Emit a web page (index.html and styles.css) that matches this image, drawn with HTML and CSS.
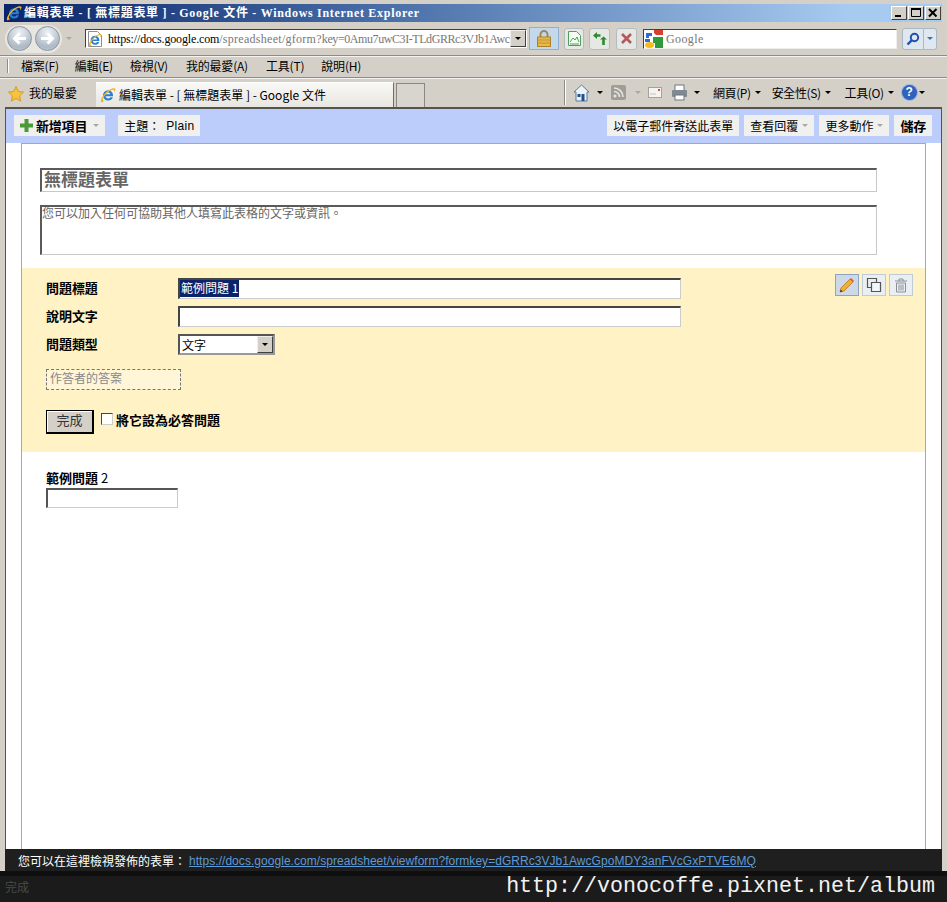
FILE: index.html
```html
<!DOCTYPE html>
<html lang="zh-Hant">
<head>
<meta charset="utf-8">
<title>編輯表單 - [ 無標題表單 ] - Google 文件</title>
<link rel="stylesheet" href="styles.css">
</head>
<body>
<svg class="defs" width="0" height="0">
  <defs>
    <symbol id="ie" viewBox="0 0 16 16">
      <path d="M8 3.200a5 5 0 0 1 5 5v1H5.600c.2 1.400 1.200 2.200 2.500 2.200 1 0 1.800-.4 2.200-1.200h2.600c-.6 2-2.500 3.300-4.800 3.300A5.100 5.100 0 0 1 3 8.300 5 5 0 0 1 8 3.200zM5.700 7.300h4.600C10.100 6.100 9.200 5.400 8 5.400s-2.100.7-2.300 1.900z" fill="#2a7fd4"/>
      <path d="M1 15C0 12.500 4 6 9 3c3-1.800 5.800-2.300 6.400-1.200.5.800-.3 2.200-1.500 3.400.3-1.100.4-1.900 0-2.300-.8-.8-3.700.3-6.200 2.600C4.500 8.300 2.500 11.500 3 13.200c.2.500.9.700 1.700.4C3.300 15 1.500 15.700 1 15z" fill="#f0b429"/>
    </symbol>
  </defs>
</svg>
<div class="window">
  <header class="titlebar">
    <svg class="ico16 title-ie"><use href="#ie"/></svg>
    <span class="title-text">編輯表單 - [ 無標題表單 ] - Google 文件 - Windows Internet Explorer</span>
    <div class="winbtns">
      <span class="winbtn"><svg width="12" height="12"><rect x="2" y="8" width="6" height="2" fill="#000"/></svg></span>
      <span class="winbtn"><svg width="12" height="12"><path d="M1.500 1.500h9v8h-9z" fill="none" stroke="#000"/><rect x="1" y="1" width="10" height="2" fill="#000"/></svg></span>
      <span class="winbtn"><svg width="12" height="12"><path d="M2 2l7.500 7.500M9.500 2L2 9.500" stroke="#000" stroke-width="2" fill="none"/></svg></span>
    </div>
  </header>

  <nav class="navbar">
    <div class="travel">
      <span class="round"><svg width="25" height="25" viewBox="0 0 25 25"><path d="M19 12.500H8M12.500 7.500l-5 5 5 5" fill="none" stroke="#fff" stroke-width="3"/></svg></span>
      <span class="round round-next"><svg width="25" height="25" viewBox="0 0 25 25"><path d="M6 12.500h11M12.500 7.500l5 5-5 5" fill="none" stroke="#fff" stroke-width="3"/></svg></span>
    </div>
    <span class="caret caret-light nav-caret"></span>
    <div class="address">
      <span class="page-ico"><svg width="14" height="16" viewBox="0 0 14 16"><path d="M.5.500h9l4 4v11H.5z" fill="#fff" stroke="#8e8e8e"/><use href="#ie" x="0" y="2" width="14" height="14"/></svg></span>
      <span class="url"><b>https://docs.google.com</b>/spreadsheet/gform?<span class="url-key">key=0Amu7uwC3I-TLdGRRc3VJb1AwcG</span></span>
      <span class="combo-btn"><span class="caret"></span></span>
    </div>
    <span class="lock"><svg width="14" height="17" viewBox="0 0 14 17"><path d="M3.500 7V4.500a3.500 3.500 0 0 1 7 0V7" fill="none" stroke="#9a8a5a" stroke-width="2"/><rect x=".5" y="7" width="13" height="9.500" fill="#e9b84a" stroke="#a8852a"/><path d="M1 10h12M1 13h12" stroke="#c0902c"/></svg></span>
    <span class="tool t-compat"><svg width="13" height="15" viewBox="0 0 13 15"><path d="M.5.500h8l4 4v10H.5z" fill="#f4fbf0" stroke="#4f9f5a"/><path d="M2 11l3-4 2 2 2-3 2 5M2 13h9" fill="none" stroke="#4f9f5a"/></svg></span>
    <span class="tool t-refresh"><svg width="16" height="15" viewBox="0 0 16 15"><path d="M1 4.500L5 1v2.200h3.500v2.600H5V8zM15 8.500l-3.500-3-3.500 3h2.200V14h2.600V8.500z" fill="#2f8a2f"/></svg></span>
    <span class="tool t-stop"><svg width="13" height="13" viewBox="0 0 13 13"><path d="M2 2l9 9M11 2l-9 9" stroke="#b8565c" stroke-width="2.600"/></svg></span>
    <div class="search">
      <svg class="glogo" width="18" height="18" viewBox="0 0 18 18"><rect width="18" height="18" fill="#fff"/><path d="M9 0h9v5H11L9 3z" fill="#d8402c"/><path d="M1 3h6v3H4v2H1zM0 9h5v3H0z" fill="#2b6fd6"/><path d="M8 7h10v11H10V13H8z" fill="#2f9a3a"/><ellipse cx="4.500" cy="15" rx="4.500" ry="3" fill="#f2bb1e"/></svg>
      <span class="search-text">Google</span>
    </div>
    <span class="go"><svg width="14" height="14" viewBox="0 0 14 14"><circle cx="8.500" cy="5.500" r="3.700" fill="none" stroke="#1f50b0" stroke-width="2"/><path d="M6 8l-4.500 4.500" stroke="#1f50b0" stroke-width="2.400"/></svg></span>
    <span class="go-more"><span class="caret caret-blue"></span></span>
  </nav>

  <div class="menubar">
    <span class="grip"></span>
    <span class="menu m1">檔案(F)</span>
    <span class="menu m2">編輯(E)</span>
    <span class="menu m3">檢視(V)</span>
    <span class="menu m4">我的最愛(A)</span>
    <span class="menu m5">工具(T)</span>
    <span class="menu m6">說明(H)</span>
  </div>

  <div class="favbar">
    <svg class="star" width="16" height="16" viewBox="0 0 16 16"><path d="M8 .5l2.300 5 5.200.6-3.900 3.600 1.100 5.400L8 12.400l-4.700 2.700 1.100-5.400L.5 6.100l5.200-.6z" fill="#f6c33b" stroke="#d99a1e"/></svg>
    <span class="fav-label">我的最愛</span>
    <div class="tab">
      <svg class="ico16"><use href="#ie"/></svg>
      <span>編輯表單 - [ 無標題表單 ] - Google 文件</span>
    </div>
    <div class="newtab"></div>
    <div class="cmdbar">
      <svg class="c-home" width="17" height="18" viewBox="0 0 17 18"><path d="M8.500 1L1 8h2v9h11V8h2z" fill="#eef2f5" stroke="#4f7fa8"/><rect x="8.500" y="10" width="3" height="7" fill="#234f8a"/><rect x="4.500" y="10" width="3" height="3" fill="#234f8a"/></svg>
      <span class="caret c-a1"></span>
      <svg class="c-rss" width="15" height="15" viewBox="0 0 15 15"><rect width="15" height="15" rx="2" fill="#9f9d96"/><circle cx="4" cy="11" r="1.600" fill="#e6e4df"/><path d="M3 6.500a5.500 5.500 0 0 1 5.500 5.500M3 3a9 9 0 0 1 9 9" fill="none" stroke="#e6e4df" stroke-width="1.600"/></svg>
      <span class="caret caret-light c-a2"></span>
      <svg class="c-mail" width="14" height="11" viewBox="0 0 14 11"><rect x=".5" y=".5" width="13" height="10" fill="#f4f3f0" stroke="#a5a29b"/><rect x="10" y="2" width="2" height="2" fill="#c8504c"/><path d="M2 7h6" stroke="#c4c1ba"/></svg>
      <svg class="c-print" width="17" height="17" viewBox="0 0 17 17"><rect x="4" y="1" width="9" height="6" fill="#fff" stroke="#6f7780"/><rect x="1" y="6" width="15" height="7" rx="1" fill="#7f8a95"/><rect x="4" y="11" width="9" height="5" fill="#fff" stroke="#6f7780"/></svg>
      <span class="caret c-a3"></span>
      <span class="cmd c-page">網頁(P)</span><span class="caret c-a4"></span>
      <span class="cmd c-safe">安全性(S)</span><span class="caret c-a4"></span>
      <span class="cmd c-tools">工具(O)</span><span class="caret c-a4"></span>
      <span class="help">?</span><span class="caret c-a5"></span>
    </div>
  </div>

  <main class="viewport">
    <div class="appbar">
      <div class="appbar-left">
        <button class="tbtn tbtn-new"><svg width="13" height="13" viewBox="0 0 13 13"><path d="M4.500 0h4v4.500H13v4H8.500V13h-4V8.500H0v-4h4.500z" fill="#4c9a3a"/></svg><b>新增項目</b><span class="caret caret-light"></span></button>
        <button class="tbtn tbtn-theme"><span>主題：</span><span class="plain">Plain</span></button>
      </div>
      <div class="appbar-right">
        <button class="tbtn">以電子郵件寄送此表單</button>
        <button class="tbtn">查看回覆<span class="caret caret-light"></span></button>
        <button class="tbtn">更多動作<span class="caret caret-light"></span></button>
        <button class="tbtn"><b>儲存</b></button>
      </div>
    </div>

    <section class="card">
      <div class="field form-title">無標題表單</div>
      <div class="field form-desc">您可以加入任何可協助其他人填寫此表格的文字或資訊。</div>

      <div class="editor">
        <div class="editor-form">
          <div class="row">
            <label class="row-label">問題標題</label>
            <div class="field text-input"><span class="selected">範例問題 1</span></div>
          </div>
          <div class="row">
            <label class="row-label">說明文字</label>
            <div class="field text-input"></div>
          </div>
          <div class="row">
            <label class="row-label">問題類型</label>
            <div class="field select-input"><span>文字</span><span class="combo-btn"><span class="caret"></span></span></div>
          </div>
          <div class="answer">作答者的答案</div>
          <div class="done-row">
            <button class="done">完成</button>
            <span class="check"></span>
            <b class="check-label">將它設為必答問題</b>
          </div>
        </div>
        <div class="editor-icons">
          <span class="ibtn ibtn-on"><svg width="16" height="16" viewBox="0 0 16 16"><path d="M1 15l1-4L11 2l3 3-9 9z" fill="#f2b02e" stroke="#a8701a" stroke-width=".7"/><path d="M11 2l1-1 3 3-1 1z" fill="#d9534f"/><path d="M1 15l.6-2.600 2 2z" fill="#333"/></svg></span>
          <span class="ibtn"><svg width="16" height="16" viewBox="0 0 16 16"><path d="M1.500 1.500h9v9h-9z" fill="none" stroke="#555" stroke-width="1.200"/><path d="M5.500 5.500h9v9h-9z" fill="#f2f7fb" stroke="#555" stroke-width="1.200"/></svg></span>
          <span class="ibtn"><svg width="14" height="15" viewBox="0 0 14 15"><path d="M1 3h12M5 3V1h4v2M2.500 5h9v9h-9zM5 6.500v6M7 6.500v6M9 6.500v6" fill="none" stroke="#8a8f94"/></svg></span>
        </div>
      </div>

      <div class="sample">
        <div class="sample-label"><b>範例問題</b> 2</div>
        <div class="field sample-input"></div>
      </div>
    </section>
  </main>

  <div class="overlay">
    <div class="notice">
      <span>您可以在這裡檢視發佈的表單：</span>
      <a class="notice-link" href="#">https://docs.google.com/spreadsheet/viewform?formkey=dGRRc3VJb1AwcGpoMDY3anFVcGxPTVE6MQ</a>
    </div>
    <div class="status">
      <span class="status-done">完成</span>
      <span class="mark">http://vonocoffe.pixnet.net/album</span>
    </div>
  </div>
</div>
</body>
</html>
```

FILE: styles.css
```css
* { box-sizing: border-box; }
html, body { margin: 0; padding: 0; }
body { font: 12px/14px "Noto Sans CJK TC", "Liberation Sans", sans-serif; color: #000; overflow: hidden; }
.defs { position: absolute; }
.ico16 { width: 16px; height: 16px; flex: none; }
.caret { display: inline-block; width: 0; height: 0; flex: none; border-left: 3px solid transparent; border-right: 3px solid transparent; border-top: 3px solid #000; }
.caret-light { border-top-color: #a8a8a8; }
.caret-blue { border-top-color: #3a6fc0; }

.window { position: relative; width: 947px; height: 902px; overflow: hidden; display: flex; flex-direction: column; background: #d4d0c8; }

.titlebar { flex: none; height: 18px; margin: 4px 5px 0 4px; display: flex; align-items: center; background: linear-gradient(90deg, #0a246a 0%, #3f649f 35%, #a6caf0 90%); color: #fff; }
.title-ie { margin-left: 2px; }
.title-text { margin-left: 2px; font: bold 12px/14px "Liberation Serif", "Noto Sans CJK TC", serif; letter-spacing: .7px; white-space: nowrap; }
.winbtns { margin-left: auto; display: flex; gap: 1px; padding-right: 1px; }
.winbtn { width: 16px; height: 14px; display: flex; align-items: center; justify-content: center; background: #d4d0c8; border: 1px solid; border-color: #fff #404040 #404040 #fff; }

.navbar { flex: none; height: 34px; display: flex; align-items: center; border-bottom: 1px solid #8e8c86; }
.travel { width: 57px; height: 28px; margin-left: 5px; padding: 0 2px; display: flex; align-items: center; gap: 3px; background: #e8e6e0; border-radius: 14px; flex: none; }
.round { width: 25px; height: 25px; border-radius: 50%; background: radial-gradient(circle at 50% 25%, #eef2f6, #aeb9c5 70%, #c8d2dc); border: 1px solid #8b96a2; display: flex; align-items: center; justify-content: center; flex: none; }
.round svg { margin: -1px; }
.nav-caret { margin-left: 4px; }
.address { width: 442px; height: 19px; margin-left: 13px; display: flex; align-items: center; background: #fff; border: 1px solid; border-color: #404040 #fff #fff #404040; overflow: hidden; flex: none; }
.page-ico { margin-left: 2px; display: flex; flex: none; }
.url { margin-left: 6px; width: 403px; overflow: hidden; white-space: nowrap; font: 12px/14px "Liberation Serif", serif; color: #777; letter-spacing: .28px; }
.url b { font-weight: normal; color: #000; letter-spacing: -.15px; }
.url-key { letter-spacing: -.42px; }
.combo-btn { width: 16px; align-self: stretch; flex: none; margin-left: auto; background: #d4d0c8; border: 1px solid; border-color: #eee #404040 #404040 #eee; display: flex; align-items: center; justify-content: center; }
.lock { width: 30px; height: 23px; margin-left: 2px; background: #c4d8ec; border: 1px solid #8fb0cf; display: flex; align-items: center; justify-content: center; flex: none; }
.tool { height: 22px; background: #e6e8e6; border: 1px solid #b5bcc0; border-radius: 3px; display: flex; align-items: center; justify-content: center; flex: none; }
.t-compat { width: 20px; margin-left: 5px; }
.t-refresh { width: 21px; margin-left: 5px; }
.t-stop { width: 21px; margin-left: 6px; }
.search { width: 254px; height: 20px; margin-left: 6px; display: flex; align-items: center; background: #fff; border: 1px solid; border-color: #404040 #eee #eee #404040; flex: none; }
.glogo { margin-left: 1px; flex: none; }
.search-text { margin-left: 3px; font: 12px/14px "Liberation Serif", serif; color: #777; letter-spacing: .4px; }
.go { width: 22px; height: 22px; margin-left: 5px; background: #dfe7ef; border: 1px solid #a9b8c6; border-radius: 3px 0 0 3px; display: flex; align-items: center; justify-content: center; flex: none; }
.go-more { width: 13px; height: 22px; background: #dfe7ef; border: 1px solid #a9b8c6; border-left: 0; border-radius: 0 3px 3px 0; display: flex; align-items: center; justify-content: center; flex: none; }

.menubar { flex: none; height: 22px; padding-bottom: 2px; display: flex; align-items: center; border-top: 1px solid #f4f3ef; border-bottom: 1px solid #8e8c86; }
.grip { width: 2px; height: 14px; margin-left: 7px; background: #8e8c86; border-right: 1px solid #fff; }
.menu { white-space: nowrap; letter-spacing: -.2px; }
.m1 { margin-left: 12px; }
.m2 { margin-left: 16px; }
.m3, .m6 { margin-left: 17px; }
.m4, .m5 { margin-left: 18px; }

.favbar { flex: none; height: 29px; display: flex; align-items: flex-end; border-top: 1px solid #f4f3ef; }
.star { margin-left: 8px; margin-bottom: 5px; flex: none; }
.fav-label { margin-left: 5px; margin-bottom: 7px; flex: none; }
.tab { width: 298px; height: 25px; margin-left: 19px; padding-left: 4px; display: flex; align-items: center; gap: 3px; background: linear-gradient(#f8f8f6, #e8e6e0); border-top: 1px solid #fff; border-right: 1px solid #706e68; flex: none; white-space: nowrap; }
.newtab { width: 29px; height: 24px; margin-left: 2px; background: #d8d5ce; border: 1px solid #8a8880; border-bottom: 0; flex: none; }
.cmdbar { flex: 1; height: 25px; margin-left: 139px; margin-bottom: 2px; display: flex; align-items: center; border-left: 1px solid #8e8c86; box-shadow: inset 1px 0 #fff; }
.c-home { margin-left: 8px; flex: none; }
.c-a1 { margin-left: 7px; }
.c-rss { margin-left: 8px; flex: none; }
.c-a2 { margin-left: 9px; }
.c-mail { margin-left: 7px; flex: none; }
.c-print { margin-left: 9px; flex: none; }
.c-a3 { margin-left: 6px; }
.cmd { white-space: nowrap; letter-spacing: -.4px; }
.c-page { margin-left: 13px; }
.c-safe { margin-left: 11px; }
.c-tools { margin-left: 14px; }
.c-a4 { margin-left: 4px; }
.help { width: 15px; height: 15px; margin-left: 8px; border-radius: 50%; background: #2f62bd; color: #fff; font: bold 12px/15px "Liberation Sans", sans-serif; text-align: center; box-shadow: 0 0 0 1px #9bb6df; flex: none; }
.c-a5 { margin-left: 2px; }

.viewport { flex: 1; min-height: 0; margin: 0 5px; border-top: 2px solid #55534e; border-left: 1px solid #55534e; border-right: 1px solid #55534e; display: flex; flex-direction: column; background: #fff; }
.appbar { flex: none; height: 34px; padding: 6px 9px 0 8px; display: flex; justify-content: space-between; align-items: flex-start; background: #bccdfb; }
.appbar-left { display: flex; gap: 13px; }
.appbar-right { display: flex; gap: 5px; }
.tbtn { height: 21px; padding: 0 6px; display: flex; align-items: center; gap: 4px; font: 12px/14px "Noto Sans CJK TC", "Liberation Sans", sans-serif; color: #000; background: #f0f0ee; border: 0; white-space: nowrap; }
.tbtn b { font-size: 13px; letter-spacing: -.2px; }
.tbtn-new { gap: 3px; }
.tbtn-new .caret { margin-left: 3px; }
.tbtn-theme { gap: 6px; }
.plain { font-family: "Liberation Sans", sans-serif; letter-spacing: .3px; }

.card { flex: 1; margin: 0 15px; display: flex; flex-direction: column; background: #fff; border: 1px solid #a8a8a8; border-bottom: 0; padding-top: 24px; }
.field { background: #fff; border-style: solid; border-width: 2px 1px 1px 2px; border-color: #5a5a5a #c8c8c8 #c8c8c8 #5a5a5a; }
.form-title { height: 24px; margin: 0 48px 0 18px; padding-left: 2px; font: bold 17px/18px "Noto Sans CJK TC", sans-serif; color: #666; }
.form-desc { height: 50px; margin: 13px 48px 13px 18px; color: #666; line-height: 11px; }
.editor { flex: none; height: 184px; display: flex; justify-content: space-between; align-items: flex-start; padding: 6px 12px 0 24px; background: #fff2c4; }
.editor-form { padding-top: 4px; }
.row { display: flex; align-items: center; height: 21px; margin-bottom: 7px; }
.row-label { width: 132px; margin-top: -2px; font-weight: bold; font-size: 13px; letter-spacing: -.05px; }
.text-input { width: 503px; height: 21px; line-height: 16px; border-color: #444 #ccc #ccc #444; }
.selected { display: inline-block; height: 17px; padding: 0 1px; background: #0a246a; color: #fff; line-height: 16px; }
.select-input { width: 97px; height: 21px; padding-left: 2px; display: flex; align-items: center; justify-content: space-between; border-color: #555 #999 #999 #555; border-width: 2px; }
.answer { width: 135px; height: 21px; margin-top: 14px; padding-left: 3px; border: 1px dashed #777; background: #fff6d8; color: #888; line-height: 16px; }
.done-row { display: flex; align-items: flex-start; margin-top: 20px; }
.done { width: 48px; height: 24px; padding: 0 0 3px; font: 13px/16px "Noto Sans CJK TC", sans-serif; color: #333; background: #d4d0c8; border-style: solid; border-width: 1px 2px 2px 1px; border-color: #000; box-shadow: inset 1px 1px #fff; }
.check { width: 12px; height: 12px; margin: 3px 3px 0 7px; background: #fff; border: 1px solid; border-color: #444 #ccc #ccc #444; }
.check-label { margin-top: 3px; font-size: 13px; }
.editor-icons { display: flex; gap: 3px; }
.ibtn { width: 24px; height: 22px; background: #e9eff2; border: 1px solid #bccbd6; display: flex; align-items: center; justify-content: center; }
.ibtn-on { background: #cdd9e8; border-color: #8ea3bd; }
.sample { padding: 20px 0 0 24px; }
.sample-label { height: 16px; line-height: 12px; font-size: 13px; }
.sample-input { width: 132px; height: 20px; border-color: #555 #ccc #ccc #555; }

.overlay { position: absolute; left: 0; right: 0; bottom: 0; height: 53px; display: flex; flex-direction: column; }
.notice { height: 22px; margin: 0 5px; padding: 2px 0 0 13px; display: flex; align-items: center; gap: 3px; background: #1f1f1f; color: #fff; white-space: nowrap; }
.notice-link { font: 12px/14px "Liberation Sans", sans-serif; color: #5c9ad8; text-decoration: underline; letter-spacing: .045px; }
.status { flex: 1; display: flex; align-items: center; justify-content: space-between; padding: 1px 12px 0 5px; background: #1b1b1b; box-shadow: inset 0 5px #0f0f0f; }
.status-done { color: #4a4a4a; }
.mark { font: 21.67px/26px "Liberation Mono", monospace; color: #f2f2f2; white-space: nowrap; }
```
